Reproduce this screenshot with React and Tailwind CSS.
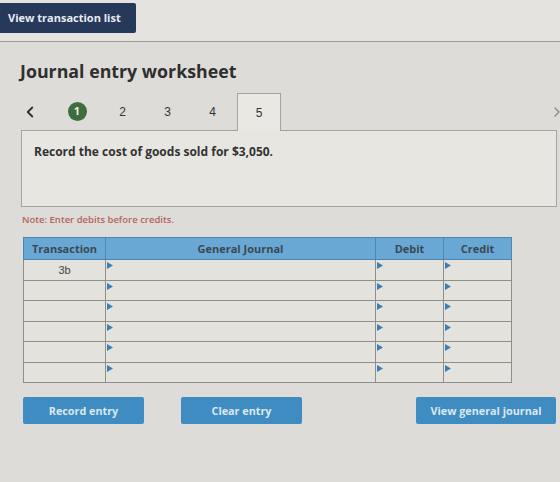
import { ChevronLeft, ChevronRight } from 'lucide-react';

const steps = ['2', '3', '4'];
const rows = ['3b', '', '', '', '', ''];

// little blue marker in the corner of editable cells
const Marker = () => (
  <svg width="6" height="7" viewBox="0 0 6 7" className="absolute left-[1px] top-[2px]">
    <path d="M0 0 L6 3.5 L0 7 Z" fill="#3b7fb6" />
  </svg>
);

const JournalEntryWorksheet = () => {
  return (
    <div
      className="w-[560px] h-[482px] overflow-hidden bg-[#dddcd8] text-[#333]"
      style={{ fontFamily: '"Open Sans", "Liberation Sans", sans-serif' }}
    >
      {/* Top bar */}
      <div className="h-[42px] bg-[#e5e3df] border-b border-[#9c9b97] pt-[3px]">
        <button className="h-[30px] w-[136px] bg-[#26395b] text-[#e8ecf2] text-[11px] font-bold text-left pl-[8px] rounded-r-[2px]">
          View transaction list
        </button>
      </div>

      <div className="pl-[20px] pr-[3px]">
        <h1 className="mt-[17px] text-[17.8px] leading-[24px] font-bold text-[#2f2f2f]">
          Journal entry worksheet
        </h1>

        {/* Step tabs */}
        <div className="mt-[10px] flex items-stretch h-[37px]">
          <div className="w-[20px] flex items-center justify-center text-[#333]">
            <ChevronLeft size={18} strokeWidth={2.5} />
          </div>
          <div className="ml-[14px] w-[46px] flex items-center justify-center">
            <span className="w-[19px] h-[19px] rounded-full bg-[#3d6c3f] text-[#e8efe6] text-[11px] font-bold flex items-center justify-center">
              1
            </span>
          </div>
          {steps.map((s) => (
            <div key={s} className="w-[45px] flex items-center justify-center text-[12px] text-[#333]" style={{ fontFamily: '"Liberation Sans", sans-serif' }}>
              {s}
            </div>
          ))}
          <div className="ml-[2px] w-[44px] relative z-10 -mb-[1px] bg-[#eae8e3] border border-b-0 border-[#a4a3a0] flex items-center justify-center text-[12px] text-[#333]" style={{ fontFamily: '"Liberation Sans", sans-serif' }}>
            5
          </div>
          <div className="flex-1" />
          <div className="flex items-center text-[#8a8a88] -mr-[8px]">
            <ChevronRight size={16} strokeWidth={2} />
          </div>
        </div>

        {/* Instruction box */}
        <div className="ml-[1px] w-[536px] h-[77px] bg-[#e8e6e1] border border-[#a4a3a0] pl-[12px] pt-[12px]">
          <p className="text-[12px] font-bold text-[#333]">Record the cost of goods sold for $3,050.</p>
        </div>

        <p className="mt-[6px] ml-[2px] text-[9.5px] font-semibold text-[#b4645a]">Note: Enter debits before credits.</p>

        {/* Entry table */}
        <table className="mt-[10px] ml-[3px] w-[489px] border-collapse text-[11px]">
          <thead>
            <tr className="h-[22px] bg-[#69a8d5] text-[#3a4853] font-bold">
              <th className="w-[82px] border border-[#4a87b3] font-bold">Transaction</th>
              <th className="w-[270px] border border-[#4a87b3] font-bold">General Journal</th>
              <th className="w-[68px] border border-[#4a87b3] font-bold">Debit</th>
              <th className="w-[68px] border border-[#4a87b3] font-bold">Credit</th>
            </tr>
          </thead>
          <tbody className="bg-[#e3e2dd]">
            {rows.map((t, i) => (
              <tr key={i} className="h-[20.5px]">
                <td className="border border-[#8e8e8b] text-center align-top pt-[2px] text-[11px] text-[#444]" style={{ fontFamily: '"Liberation Sans", sans-serif' }}>
                  {t}
                </td>
                <td className="border border-[#8e8e8b] relative"><Marker /></td>
                <td className="border border-[#8e8e8b] relative"><Marker /></td>
                <td className="border border-[#8e8e8b] relative"><Marker /></td>
              </tr>
            ))}
          </tbody>
        </table>

        {/* Actions */}
        <div className="mt-[14px] flex">
          <button className="ml-[3px] h-[27px] w-[121px] bg-[#3f8cc2] text-[#dce8f1] text-[10.8px] font-bold rounded-[2px]">
            Record entry
          </button>
          <button className="ml-[37px] h-[27px] w-[121px] bg-[#3f8cc2] text-[#dce8f1] text-[10.8px] font-bold rounded-[2px]">
            Clear entry
          </button>
          <button className="ml-[114px] h-[27px] w-[140px] bg-[#3f8cc2] text-[#dce8f1] text-[10.8px] font-bold rounded-[2px]">
            View general journal
          </button>
        </div>
      </div>
    </div>
  );
};

export default JournalEntryWorksheet;
